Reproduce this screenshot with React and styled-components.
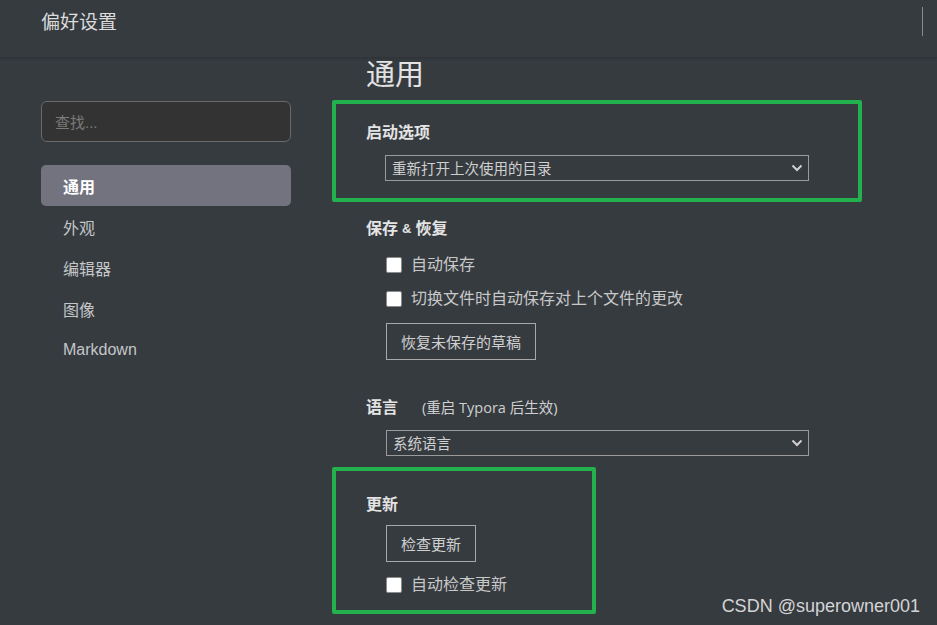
import React from 'react';
import styled, { createGlobalStyle } from 'styled-components';

const GlobalStyle = createGlobalStyle`
  html, body {
    margin: 0;
    padding: 0;
    background: #363b40;
  }
  body {
    font-family: 'Liberation Sans', 'Noto Sans CJK SC', sans-serif;
    color: #d6d6d6;
  }
`;

const Page = styled.div`
  position: relative;
  width: 937px;
  height: 625px;
  overflow: hidden;
  background: #363b40;
`;

const Header = styled.div`
  height: 57px;
  display: flex;
  align-items: flex-start;
  justify-content: space-between;
  padding-left: 41px;
  border-bottom: 1px solid #30343a;
  box-shadow: 0 1px 2px rgba(0, 0, 0, 0.12);
  box-sizing: content-box;
`;

const HeaderTitle = styled.div`
  margin-top: 11px;
  font-size: 19px;
  line-height: 24px;
  color: #dcdcdc;
`;

const HeaderDivider = styled.div`
  margin-top: 7px;
  margin-right: 14px;
  width: 1px;
  height: 29px;
  background: #8a8d90;
`;

const Body = styled.div`
  display: flex;
`;

const Sidebar = styled.div`
  width: 250px;
  padding-left: 41px;
  padding-top: 43px;
  flex-shrink: 0;
`;

const SearchBox = styled.div`
  height: 39px;
  border: 1px solid #6a6a6a;
  border-radius: 6px;
  background: #333333;
  display: flex;
  align-items: center;
  padding-left: 13px;
  font-size: 15px;
  color: #7a7a7a;
  margin-bottom: 23px;
`;

const NavItem = styled.div`
  height: 41px;
  display: flex;
  align-items: center;
  padding-left: 22px;
  border-radius: 5px;
  font-size: 16px;
  color: ${(p) => (p.$active ? '#ffffff' : '#c4c6c8')};
  font-weight: ${(p) => (p.$active ? 600 : 400)};
  background: ${(p) => (p.$active ? '#737380' : 'transparent')};
`;

const Main = styled.div`
  margin-left: 41px;
  display: flex;
  flex-direction: column;
  align-items: flex-start;
`;

const PageHeading = styled.h1`
  margin: 2px 0 9px 34px;
  font-size: 29px;
  line-height: 31px;
  font-weight: 400;
  color: #e2e2e2;
`;

const Section = styled.div`
  box-sizing: border-box;
  width: ${(p) => p.$width || 530}px;
  border: 4px solid ${(p) => (p.$highlight ? '#22b14c' : 'transparent')};
  border-radius: 2px;
  padding: ${(p) => p.$pad || '0 0 0 30px'};
  display: flex;
  flex-direction: column;
  align-items: flex-start;
`;

const SectionTitle = styled.div`
  display: flex;
  align-items: center;
  font-size: 16px;
  line-height: 20px;
  font-weight: 700;
  color: #e4e4e4;
`;

const Amp = styled.span`
  font-size: 13px;
  margin: 0 4px;
`;

const Hint = styled.span`
  margin-left: 24px;
  font-family: 'Open Sans', 'Noto Sans CJK SC', sans-serif;
  font-size: 14.5px;
  font-weight: 400;
  color: #d0d0d0;
`;

const SelectBox = styled.div`
  box-sizing: border-box;
  margin-top: ${(p) => p.$top || 12}px;
  margin-left: ${(p) => p.$left || 20}px;
  width: ${(p) => p.$width || 423}px;
  height: 26px;
  border: 1px solid #9a9a9a;
  display: flex;
  align-items: center;
  justify-content: space-between;
  padding: 0 5px 2px 6px;
  font-size: 14.5px;
  color: #cfcfcf;
`;

const CheckRow = styled.label`
  margin-top: ${(p) => p.$top || 14}px;
  margin-left: 20px;
  display: flex;
  align-items: center;
  gap: 9px;
  font-size: 16px;
  line-height: 20px;
  color: #c8c8c8;
`;

const CheckBox = styled.span`
  width: 14px;
  height: 14px;
  border: 1px solid #8c8c8c;
  border-radius: 2px;
  background: #ffffff;
`;

const Button = styled.div`
  margin-top: ${(p) => p.$top || 14}px;
  margin-left: 20px;
  height: 35px;
  display: flex;
  align-items: center;
  padding: 0 14px;
  border: 1px solid #a8a8a8;
  font-size: 15px;
  color: #d0d0d0;
`;

const Watermark = styled.div`
  position: absolute;
  right: 17px;
  bottom: 8px;
  font-family: 'Liberation Sans', sans-serif;
  font-size: 18px;
  color: #d4d4d4;
`;

const Chevron = () => (
  <svg width="12" height="8" viewBox="0 0 12 8" style={{ marginTop: 2 }}>
    <path d="M1.5 1.5 L6 6 L10.5 1.5" fill="none" stroke="#d0d0d0" strokeWidth="2" />
  </svg>
);

const navItems = ['通用', '外观', '编辑器', '图像', 'Markdown'];

export default function App() {
  return (
    <Page>
      <GlobalStyle />
      <Header>
        <HeaderTitle>偏好设置</HeaderTitle>
        <HeaderDivider />
      </Header>
      <Body>
        <Sidebar>
          <SearchBox>查找...</SearchBox>
          {navItems.map((item, i) => (
            <NavItem key={item} $active={i === 0}>{item}</NavItem>
          ))}
        </Sidebar>
        <Main>
          <PageHeading>通用</PageHeading>

          <Section $highlight $width={530} $pad="19px 0 17px 30px">
            <SectionTitle>启动选项</SectionTitle>
            <SelectBox $left={19} $width={424}>
              <span>重新打开上次使用的目录</span>
              <Chevron />
            </SelectBox>
          </Section>

          <Section $pad="13px 0 0 30px">
            <SectionTitle>保存<Amp>&amp;</Amp>恢复</SectionTitle>
            <CheckRow $top={16}>
              <CheckBox />
              自动保存
            </CheckRow>
            <CheckRow>
              <CheckBox />
              切换文件时自动保存对上个文件的更改
            </CheckRow>
            <Button>恢复未保存的草稿</Button>
          </Section>

          <Section $pad="30px 0 7px 30px">
            <SectionTitle>
              语言
              <Hint>(重启 Typora 后生效)</Hint>
            </SectionTitle>
            <SelectBox>
              <span>系统语言</span>
              <Chevron />
            </SelectBox>
          </Section>

          <Section $highlight $width={264} $pad="24px 0 15px 30px">
            <SectionTitle>更新</SectionTitle>
            <Button $top={10}>检查更新</Button>
            <CheckRow $top={13}>
              <CheckBox />
              自动检查更新
            </CheckRow>
          </Section>
        </Main>
      </Body>
      <Watermark>CSDN @superowner001</Watermark>
    </Page>
  );
}
